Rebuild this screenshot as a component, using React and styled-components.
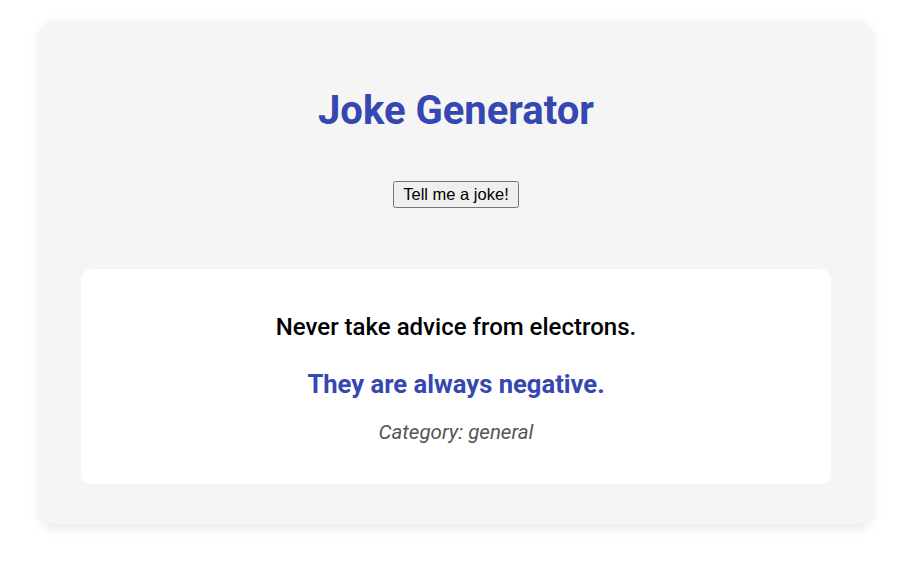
import React from 'react';
import styled, { createGlobalStyle } from 'styled-components';

const GlobalStyle = createGlobalStyle`
  body {
    margin: 0;
    background: #ffffff;
    font-family: Roboto, "Liberation Sans", Arial, sans-serif;
  }
`

const Page = styled.div`
  padding: 20px 48px 44px 40px;
`

const Container = styled.div`
  width: 750px;
  padding: 40px 41px;
  background-color: #f5f5f5;
  border-radius: 15px;
  box-shadow: 0 4px 12px rgba(0, 0, 0, 0.1);
  text-align: center;
`

const Title = styled.h1`
  font-size: 40px;
  font-weight: 700;
  color: #3547b0;
  margin: 27px 0 27px;
`

const ButtonRow = styled.div`
  margin: 47px 0 61px;
  line-height: 0;
`

const JokeButton = styled.button`
  font-family: Arial, "Liberation Sans", sans-serif;
  font-size: 16.5px;
  line-height: 19px;
  padding: 2px 8px;
  color: #000;
`

const JokeCard = styled.div`
  background-color: #ffffff;
  border-radius: 10px;
  padding: 44px 30px 40px;
`

const Setup = styled.p`
  margin: 0;
  font-size: 24px;
  font-weight: 500;
  line-height: 29px;
  color: #000;
`

const Punchline = styled.p`
  margin: 27px 0 0;
  font-size: 25.6px;
  font-weight: 700;
  line-height: 30px;
  color: #3547b0;
`

const Category = styled.p`
  margin: 21px 0 0;
  font-size: 20.5px;
  font-style: italic;
  line-height: 24px;
  color: #555;
`

const App = () => {
  return (
    <Page>
      <GlobalStyle />
      <Container>
        <Title>Joke Generator</Title>
        <ButtonRow>
          <JokeButton>Tell me a joke!</JokeButton>
        </ButtonRow>
        <JokeCard>
          <Setup>Never take advice from electrons.</Setup>
          <Punchline>They are always negative.</Punchline>
          <Category>Category: general</Category>
        </JokeCard>
      </Container>
    </Page>
  )
}

export default App;
